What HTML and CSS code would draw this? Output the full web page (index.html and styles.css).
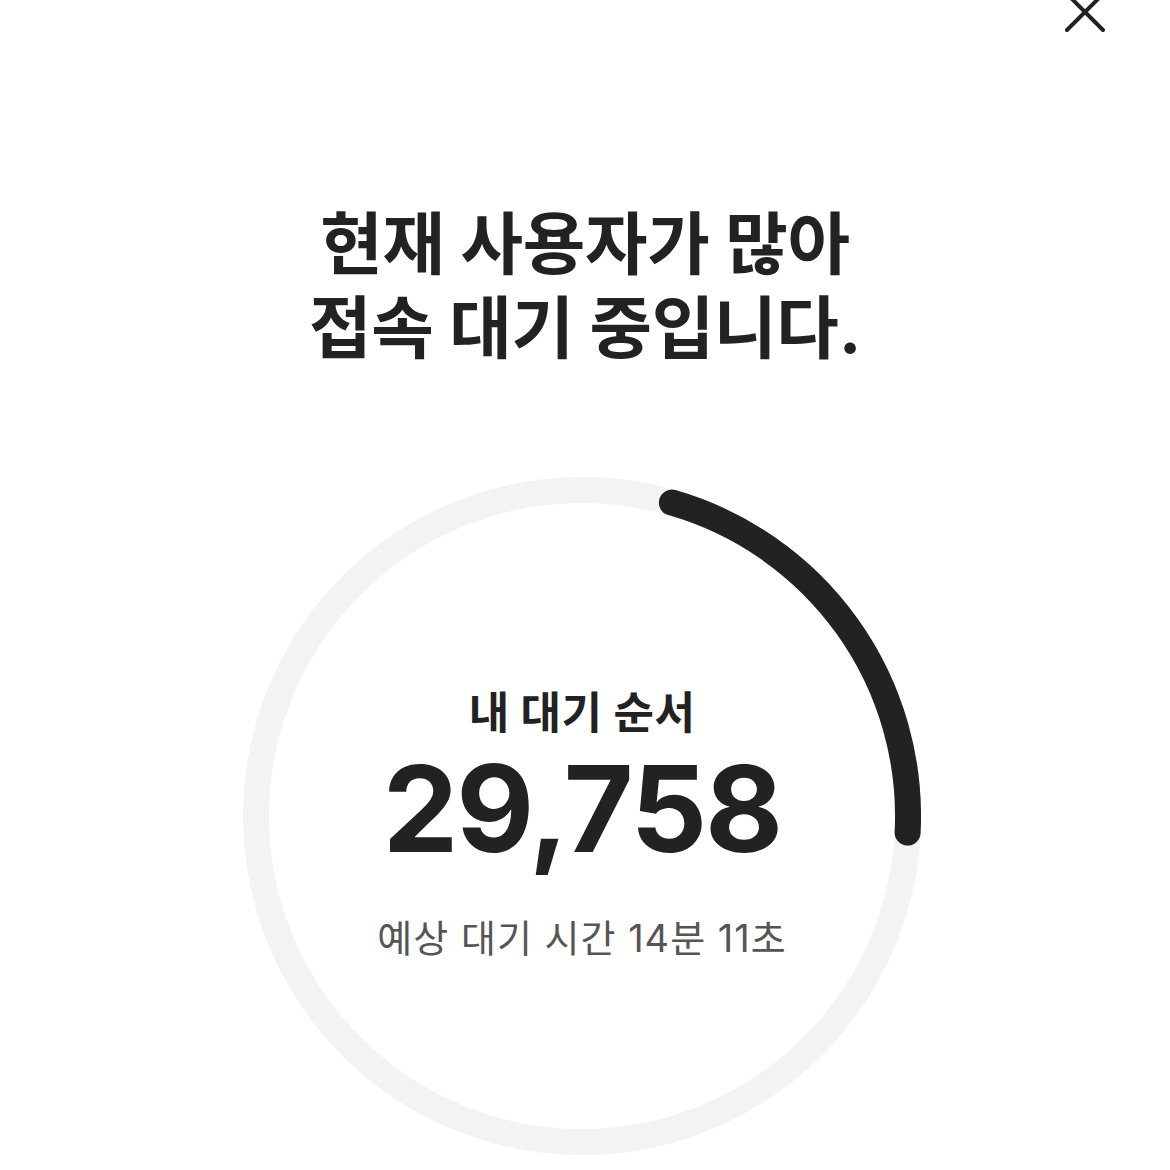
FILE: index.html
```html
<!DOCTYPE html>
<html lang="ko">
<head>
    <meta charset="utf-8">
    <title>접속 대기</title>
    <link rel="stylesheet" href="styles.css">
</head>
<body>
    <div class="page">
        <div class="topbar">
            <button class="close-button" aria-label="닫기">
                <svg width="44" height="44" viewBox="0 0 44 44">
                    <path d="M4 4 L40 40 M40 4 L4 40" stroke="#222" stroke-width="4" stroke-linecap="round" fill="none"/>
                </svg>
            </button>
        </div>

        <h1 class="title">현재 사용자가 많아<br>접속 대기 중입니다.</h1>

        <div class="queue">
            <svg class="queue-ring" width="678" height="678" viewBox="0 0 678 678">
                <circle cx="339" cy="339" r="326" stroke="#f3f3f3" stroke-width="26" fill="none"/>
                <!-- progress arc, roughly 16deg to 87deg from the top -->
                <path d="M428.9 25.6 A326 326 0 0 1 664.6 355.6" stroke="#222" stroke-width="26" stroke-linecap="round" fill="none"/>
            </svg>
            <div class="queue-info">
                <div class="queue-label">내 대기 순서</div>
                <div class="queue-number">29,758</div>
                <div class="queue-time">예상 대기 시간 14분 11초</div>
            </div>
        </div>
    </div>
</body>
</html>
```

FILE: styles.css
```css
* {
    box-sizing: border-box;
    margin: 0;
    padding: 0;
}

body {
    background-color: #ffffff;
    color: #222222;
    font-family: Inter, "Noto Sans CJK KR", sans-serif;
}

.page {
    width: 1170px;
    min-height: 1170px;
    overflow: hidden;
}

.topbar {
    display: flex;
    justify-content: flex-end;
    height: 40px;
    padding-right: 63px;
}

.close-button {
    border: none;
    background: none;
    cursor: pointer;
    margin-top: -10px;
    width: 44px;
    height: 44px;
}

.title {
    margin-top: 162px;
    text-align: center;
    font-size: 68px;
    font-weight: 700;
    line-height: 84px;
    letter-spacing: -0.3px;
    color: #222222;
}

.queue {
    display: grid;
    width: 678px;
    height: 678px;
    margin: 107px auto 0;
    transform: translateX(-3px);
}

.queue-ring,
.queue-info {
    grid-area: 1 / 1;
}

.queue-info {
    display: flex;
    flex-direction: column;
    align-items: center;
    justify-content: center;
    padding-top: 18px;
}

.queue-label {
    font-size: 44px;
    font-weight: 700;
    letter-spacing: 0.5px;
    line-height: 1.2;
}

.queue-number {
    font-size: 120px;
    font-weight: 700;
    letter-spacing: -2px;
    line-height: 1.1;
    margin-top: 4px;
}

.queue-time {
    font-size: 38px;
    font-weight: 400;
    color: #555555;
    letter-spacing: 1px;
    margin-top: 33px;
}
```
